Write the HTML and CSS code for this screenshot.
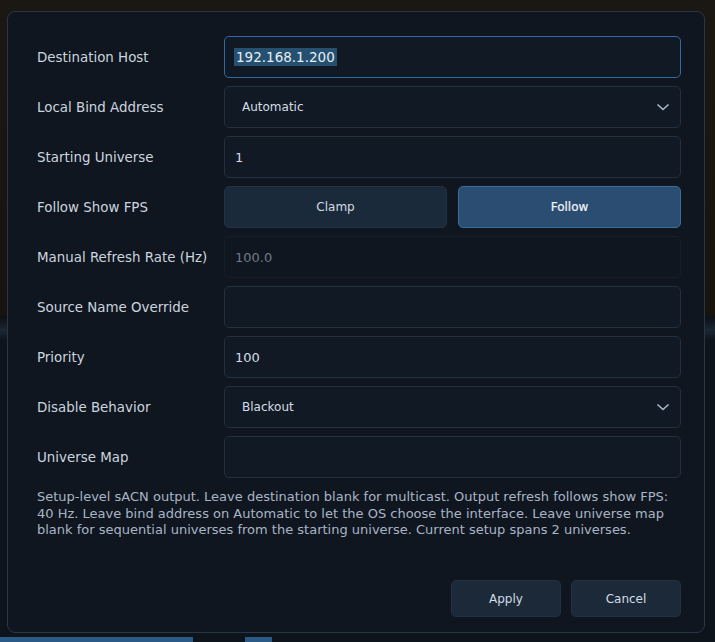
FILE: index.html
```html
<!DOCTYPE html>
<html lang="en">
<head>
    <meta charset="UTF-8">
    <meta name="viewport" content="width=device-width, initial-scale=1.0">
    <title>sACN Output Settings</title>
    <link rel="stylesheet" href="styles.css">
</head>
<body>
    <!-- Output settings dialog -->
    <div class="dialog">
        <div class="form">
            <div class="label">Destination Host</div>
            <div class="field focused"><span class="selected">192.168.1.200</span></div>

            <div class="label">Local Bind Address</div>
            <div class="field select">
                <span>Automatic</span>
                <svg class="chevron" width="14" height="8" viewBox="0 0 14 8"><polyline points="1.5,1.5 7,6.5 12.5,1.5" /></svg>
            </div>

            <div class="label">Starting Universe</div>
            <div class="field">1</div>

            <div class="label">Follow Show FPS</div>
            <div class="toggle">
                <button class="toggle-btn">Clamp</button>
                <button class="toggle-btn active">Follow</button>
            </div>

            <div class="label">Manual Refresh Rate (Hz)</div>
            <div class="field disabled">100.0</div>

            <div class="label">Source Name Override</div>
            <div class="field"></div>

            <div class="label">Priority</div>
            <div class="field">100</div>

            <div class="label">Disable Behavior</div>
            <div class="field select">
                <span>Blackout</span>
                <svg class="chevron" width="14" height="8" viewBox="0 0 14 8"><polyline points="1.5,1.5 7,6.5 12.5,1.5" /></svg>
            </div>

            <div class="label">Universe Map</div>
            <div class="field"></div>
        </div>

        <p class="help">Setup-level sACN output. Leave destination blank for multicast. Output refresh follows show FPS: 40 Hz. Leave bind address on Automatic to let the OS choose the interface. Leave universe map blank for sequential universes from the starting universe. Current setup spans 2 universes.</p>

        <div class="actions">
            <button class="action-btn">Apply</button>
            <button class="action-btn">Cancel</button>
        </div>
    </div>
</body>
</html>
```
FILE: styles.css
```css
body {
    margin: 0;
    height: 642px;
    overflow: hidden;
    font-family: "DejaVu Sans", Verdana, sans-serif;
    font-size: 13px;
    color: #c9d2de;
    /* backdrop: app window behind the modal */
    background:
        linear-gradient(to right, #2a5a85 0, #2a5a85 193px, transparent 193px, transparent 245px, #2a5a85 245px, #2a5a85 272px, transparent 272px) 0 637px / 100% 5px no-repeat,
        linear-gradient(to bottom, #1b1713 0, #17130f 315px, #0c1219 318px, #1c2734 330px, #0d141c 340px, #0d141c 100%);
}

/* Dialog */
.dialog {
    box-sizing: border-box;
    width: 698px;
    height: 622px;
    margin: 11px 0 0 7px;
    padding: 24px 23px 15px 29px;
    background-color: #0f1620;
    border: 1px solid #2a3545;
    border-radius: 8px;
    display: flex;
    flex-direction: column;
}

/* Form grid */
.form {
    display: grid;
    grid-template-columns: 187px 457px;
    grid-auto-rows: 42px;
    row-gap: 8px;
}

.label {
    display: flex;
    align-items: center;
    font-size: 13.4px;
    color: #ccd4df;
}

.field {
    box-sizing: border-box;
    display: flex;
    align-items: center;
    padding: 0 10px;
    background-color: #111a24;
    border: 1px solid #243040;
    border-radius: 5px;
    color: #d5dce6;
}

.field.focused {
    border-color: #2f6aa6;
}

.selected {
    background-color: #25506f;
    color: #e6edf5;
    padding: 1px 2px;
    margin-left: -1px;
    font-size: 13.5px;
}

.field.select {
    padding: 0 10px 0 17px;
    justify-content: space-between;
    font-size: 12px;
}

.chevron polyline {
    fill: none;
    stroke: #a9b8ca;
    stroke-width: 1.6;
}

.field.disabled {
    background-color: #0f1620;
    border-color: #151e29;
    color: #6f7a88;
}

/* Clamp / Follow toggle */
.toggle {
    display: grid;
    grid-template-columns: 1fr 1fr;
    gap: 11px;
}

button {
    font-family: "DejaVu Sans", Verdana, sans-serif;
    font-size: 12px;
    color: #d3dbe5;
    border-radius: 5px;
    cursor: pointer;
}

.toggle-btn {
    background-color: #1b2a3a;
    border: 1px solid #203244;
}

.toggle-btn.active {
    background-color: #2a4d71;
    border-color: #3a6c9e;
    color: #f2f6fa;
    -webkit-text-stroke: 0.2px #f2f6fa;
}

/* Help text */
.help {
    margin: 11px 0 0;
    font-size: 13px;
    line-height: 16.5px;
    color: #a9b5c4;
    width: 640px;
}

/* Bottom buttons */
.actions {
    margin-top: auto;
    display: flex;
    justify-content: flex-end;
    gap: 10px;
}

.action-btn {
    width: 110px;
    height: 37px;
    background-color: #1b2939;
    border: 1px solid #223143;
}
```
